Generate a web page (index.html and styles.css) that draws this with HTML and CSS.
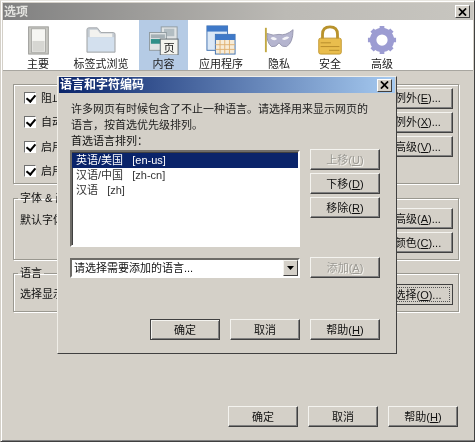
FILE: index.html
```html
<!DOCTYPE html>
<html lang="zh">
<head>
<meta charset="utf-8">
<title>选项</title>
<link rel="stylesheet" href="styles.css">
</head>
<body>
<div class="window">
  <div class="titlebar main-title">
    <span class="title-text">选项</span>
    <span class="close">
      <svg width="9" height="8" viewBox="0 0 10 9"><path d="M1 0.5 L9 8.5 M9 0.5 L1 8.5" stroke="#000" stroke-width="2" fill="none"/></svg>
    </span>
  </div>
  <div class="toolbar">
    <div class="tab">
      <svg class="icon" width="30" height="30" viewBox="0 0 32 32">
        <rect x="6" y="2" width="21" height="29" fill="#c9c9c4" stroke="#9a9a96"/>
        <rect x="9" y="4" width="15" height="25" fill="#f6f6f3" stroke="#a8a8a4"/>
        <rect x="10" y="17" width="13" height="11" fill="#d6d6d2"/>
      </svg>
      <span>主要</span>
    </div>
    <div class="tab">
      <svg class="icon" width="30" height="30" viewBox="0 0 32 32">
        <path d="M1 29 V5 Q1 3 3 3 H12 L16 8 H29 Q31 8 31 10 V29 Z" fill="#c4cbd2" stroke="#a4a8ab"/>
        <path d="M4 5 H12 L15 9 H28 V13 H4 Z" fill="#f2f2ef"/>
        <path d="M2 13 H30 V28 H2 Z" fill="#d3e0ee"/>
      </svg>
      <span>标签式浏览</span>
    </div>
    <div class="tab active">
      <svg class="icon" width="30" height="30" viewBox="0 0 32 32">
        <rect x="13" y="2" width="17" height="20" fill="#dfe3e4" stroke="#8f9a9f"/>
        <rect x="16" y="4" width="11" height="8" fill="#b2bdc2"/>
        <rect x="0.5" y="8" width="18" height="19" fill="#dfe3e4" stroke="#8f9a9f"/>
        <rect x="2" y="10" width="15" height="4" fill="#a5b0b5"/>
        <rect x="2" y="15" width="15" height="5" fill="#2f8f88"/>
        <rect x="12" y="15" width="19" height="17" fill="#f4f4ee" stroke="#5c666b"/>
        <text x="21.5" y="29" class="page-glyph">页</text>
      </svg>
      <span>内容</span>
    </div>
    <div class="tab">
      <svg class="icon" width="30" height="30" viewBox="0 0 32 32">
        <rect x="1" y="1" width="22" height="26" fill="#dbe8f6" stroke="#3e6fae"/>
        <rect x="1" y="1" width="22" height="6" fill="#3f79c8"/>
        <rect x="10" y="10" width="21" height="21" fill="#f7ecd8" stroke="#3e6fae"/>
        <rect x="10" y="10" width="21" height="6" fill="#3f79c8"/>
        <path d="M15 16 V31 M20 16 V31 M25 16 V31 M10 21 H31 M10 26 H31" stroke="#e0b070" fill="none"/>
      </svg>
      <span>应用程序</span>
    </div>
    <div class="tab">
      <svg class="icon" width="30" height="30" viewBox="0 0 32 32">
        <path d="M3 9 Q10 12 16 10 Q23 12 31 5 Q31 19 24 23 Q19 24 16 19 Q13 24 8 23 Q3 19 3 9 Z" fill="#b5b5cf" stroke="#9494ad"/>
        <path d="M7 14 Q10 11 14 15 Q10 18 7 14 Z M19 15 Q23 11 27 13 Q23 18 19 15 Z" fill="#f4f4f8"/>
        <rect x="1" y="3" width="2" height="26" fill="#c2a944"/>
      </svg>
      <span>隐私</span>
    </div>
    <div class="tab">
      <svg class="icon" width="30" height="30" viewBox="0 0 32 32">
        <path d="M8 15 V10 Q8 2 16 2 Q24 2 24 10 V15" fill="none" stroke="#b8922c" stroke-width="3"/>
        <rect x="4" y="14" width="24" height="17" rx="2" fill="#e9bd4d" stroke="#c0962e"/>
        <path d="M6 19 H17 M6 23 H26 M15 27 H26" stroke="#b58b2a" fill="none"/>
      </svg>
      <span>安全</span>
    </div>
    <div class="tab">
      <svg class="icon" width="30" height="30" viewBox="0 0 32 32">
        <circle cx="16" cy="16" r="9.5" fill="none" stroke="#9c9cd2" stroke-width="7"/>
        <path d="M16 1 V6 M16 26 V31 M1 16 H6 M26 16 H31 M5.4 5.4 L9 9 M23 23 L26.6 26.6 M26.6 5.4 L23 9 M9 23 L5.4 26.6" stroke="#9c9cd2" stroke-width="5" fill="none"/>
      </svg>
      <span>高级</span>
    </div>
  </div>
  <div class="main">
    <fieldset class="group g1">
      <div class="opt-row"><span class="check"></span><span class="opt-label">阻止弹出窗口</span><button class="btn">例外(<u>E</u>)...</button></div>
      <div class="opt-row"><span class="check"></span><span class="opt-label">自动加载图像</span><button class="btn">例外(<u>X</u>)...</button></div>
      <div class="opt-row"><span class="check"></span><span class="opt-label">启用 Java</span><button class="btn">高级(<u>V</u>)...</button></div>
      <div class="opt-row"><span class="check"></span><span class="opt-label">启用 JavaScript</span></div>
    </fieldset>
    <fieldset class="group g2">
      <legend>字体 &amp; 颜色</legend>
      <div class="g2-body">
        <span class="opt-text">默认字体</span>
        <div class="btn-col">
          <button class="btn">高级(<u>A</u>)...</button>
          <button class="btn">颜色(<u>C</u>)...</button>
        </div>
      </div>
    </fieldset>
    <fieldset class="group g3">
      <legend>语言</legend>
      <div class="g3-body">
        <span class="opt-text">选择显示网页的语言</span>
        <button class="btn focus">选择(<u>O</u>)...</button>
      </div>
    </fieldset>
  </div>
  <div class="footer">
    <button class="btn">确定</button>
    <button class="btn">取消</button>
    <button class="btn">帮助(<u>H</u>)</button>
  </div>
</div>

<div class="dialog">
  <div class="titlebar dlg-title">
    <span class="title-text">语言和字符编码</span>
    <span class="close">
      <svg width="9" height="8" viewBox="0 0 10 9"><path d="M1 0.5 L9 8.5 M9 0.5 L1 8.5" stroke="#000" stroke-width="2" fill="none"/></svg>
    </span>
  </div>
  <div class="dlg-body">
    <p class="intro">许多网页有时候包含了不止一种语言。请选择用来显示网页的<br>语言，按首选优先级排列。</p>
    <div class="list-label">首选语言排列：</div>
    <div class="list-row">
      <div class="listbox">
        <div class="item selected">英语/美国&nbsp;&nbsp; [en-us]</div>
        <div class="item">汉语/中国&nbsp;&nbsp; [zh-cn]</div>
        <div class="item">汉语&nbsp;&nbsp; [zh]</div>
      </div>
      <div class="btn-col list-btns">
        <button class="btn disabled">上移(<u>U</u>)</button>
        <button class="btn">下移(<u>D</u>)</button>
        <button class="btn">移除(<u>R</u>)</button>
      </div>
    </div>
    <div class="add-row">
      <div class="combo">
        <span class="combo-text">请选择需要添加的语言...</span>
        <span class="combo-arrow"><svg width="7" height="4" viewBox="0 0 7 4"><path d="M0 0 H7 L3.5 4 Z" fill="#000"/></svg></span>
      </div>
      <button class="btn disabled">添加(<u>A</u>)</button>
    </div>
    <div class="dlg-footer">
      <button class="btn default">确定</button>
      <button class="btn">取消</button>
      <button class="btn">帮助(<u>H</u>)</button>
    </div>
  </div>
</div>
</body>
</html>
```
FILE: styles.css
```css
* { box-sizing: border-box; }
html, body { margin: 0; padding: 0; }
body {
  width: 475px;
  height: 442px;
  position: relative;
  overflow: hidden;
  background: #d4d0c8;
  font-family: "Liberation Sans", "Noto Sans CJK SC", sans-serif;
  font-size: 11px;
  line-height: 14px;
  color: #111;
  filter: blur(0.3px);
}
.window {
  width: 475px;
  height: 442px;
  display: flex;
  flex-direction: column;
  background: #d4d0c8;
  border: 1px solid;
  border-color: #e8e6e0 #404040 #404040 #d4d0c8;
  padding: 2px 1px 1px 2px;
  box-shadow: inset 1px 1px 0 #fff, inset 0 -1px 0 #808080;
}
.titlebar {
  display: flex;
  align-items: center;
  justify-content: space-between;
  flex: none;
}
.main-title {
  height: 17px;
  background: linear-gradient(90deg, #808080, #bcbab5 60%, #c8c6c0);
  padding: 0 3px 0 1px;
}
.title-text { color: #e4e4e0; font-weight: 700; font-size: 12px; }
.close {
  width: 15px;
  height: 13px;
  display: flex;
  align-items: center;
  justify-content: center;
  background: #d4d0c8;
  border: 1px solid;
  border-color: #fff #404040 #404040 #fff;
}
.toolbar {
  height: 51px;
  flex: none;
  background: #fff;
  display: flex;
  padding-left: 10px;
  border-bottom: 1px solid #a8a6a0;
}
.tab {
  display: flex;
  flex-direction: column;
  align-items: center;
  flex: none;
  padding-top: 5px;
  color: #222;
}
.tab:nth-child(1) { width: 50px; }
.tab:nth-child(2) { width: 76px; }
.tab:nth-child(3) { width: 49px; }
.tab:nth-child(4) { width: 66px; }
.tab:nth-child(5) { width: 50px; }
.tab:nth-child(6) { width: 52px; }
.tab:nth-child(7) { width: 52px; }
.tab.active { background: #b5cbe5; }
.icon { display: block; margin-bottom: 2px; flex: none; }
.page-glyph { font-size: 12px; text-anchor: middle; fill: #222; }
.main {
  flex: 1;
  padding: 13px 14px 0 10px;
  display: flex;
  flex-direction: column;
}
.group {
  margin: 0;
  border: 1px solid #9a9890;
  box-shadow: 1px 1px 0 #fff, inset 1px 1px 0 #fff;
  padding: 0 5px 0 10px;
  min-width: 0;
  flex: none;
}
.group legend { padding: 0 2px; margin-left: -3px; line-height: 14px; }
.g1 { height: 100px; padding-top: 1px; }
.g2 { height: 69px; margin-top: 7px; padding-left: 7px; padding-top: 3px; }
.g3 { height: 46px; margin-top: 6px; padding-left: 7px; padding-top: 4px; }
.opt-row { display: flex; align-items: center; height: 24.3px; }
.opt-row .btn { margin-left: auto; }
.check {
  width: 12px;
  height: 12px;
  flex: none;
  margin-right: 5px;
  background: #fff;
  border: 1px solid;
  border-color: #707070 #fff #fff #707070;
  position: relative;
}
.check::after {
  content: "";
  position: absolute;
  left: 3px;
  top: 0;
  width: 4px;
  height: 7px;
  border: solid #000;
  border-width: 0 2px 2px 0;
  transform: rotate(40deg);
}
.g2-body { display: flex; justify-content: space-between; }
.g2-body .opt-text { margin-top: 5px; margin-left: -1px; }
.g3-body .opt-text { margin-left: -1px; margin-top: -2px; }
.g3-body { display: flex; justify-content: space-between; align-items: center; height: 21px; }
.btn {
  width: 70px;
  height: 21px;
  padding: 0;
  flex: none;
  font: inherit;
  color: #111;
  background: #d4d0c8;
  border: 1px solid;
  border-color: #f4f3ef #404040 #404040 #f4f3ef;
  box-shadow: inset -1px -1px 0 #808080;
  display: flex;
  align-items: center;
  justify-content: center;
}
.btn.disabled { color: #9c9a94; text-shadow: 1px 1px 0 #f4f3ef; }
.btn.default { border-color: #404040; box-shadow: inset 1px 1px 0 #f4f3ef, inset -1px -1px 0 #808080; }
.btn.focus { border-color: #404040; box-shadow: inset 0 0 0 1px #d4d0c8; outline: 1px dotted #555; outline-offset: -4px; }
.footer {
  flex: none;
  display: flex;
  justify-content: flex-end;
  gap: 10px;
  padding: 0 15px 13px 0;
}
.dialog {
  position: absolute;
  left: 57px;
  top: 76px;
  width: 340px;
  height: 278px;
  background: #d4d0c8;
  border: 1px solid;
  border-color: #f0eee8 #404040 #404040 #f0eee8;
  padding: 0 1px 1px;
  display: flex;
  flex-direction: column;
}
.dlg-title {
  height: 16px;
  background: linear-gradient(90deg, #0a246a, #a6caf0);
  padding: 0 3px 0 1px;
}
.dlg-title .title-text { color: #fff; }
.dlg-body { flex: 1; display: flex; flex-direction: column; padding: 8px 15px 12px 11px; }
.intro { margin: 0 0 0 1px; line-height: 16px; color: #222; white-space: nowrap; }
.list-label { margin-left: 1px; line-height: 16px; }
.list-row { display: flex; gap: 10px; margin-top: 1px; }
.listbox {
  width: 230px;
  height: 97px;
  flex: none;
  background: #fff;
  border: 2px solid;
  border-color: #6e6c68 #fff #fff #6e6c68;
  box-shadow: inset 1px 1px 0 #404040;
  padding-top: 1px;
}
.item { height: 15px; line-height: 15px; padding-left: 4px; color: #333; }
.item.selected { background: #0a246a; color: #fff; }
.btn-col { display: flex; flex-direction: column; gap: 3px; }
.list-btns { margin-top: -1px; }
.add-row { display: flex; gap: 10px; margin-top: 10px; align-items: center; }
.combo {
  width: 230px;
  height: 20px;
  flex: none;
  display: flex;
  background: #fff;
  border: 2px solid;
  border-color: #6e6c68 #fff #fff #6e6c68;
  padding-left: 2px;
  align-items: center;
}
.combo-text { flex: 1; }
.combo-arrow {
  width: 15px;
  height: 16px;
  background: #d4d0c8;
  border: 1px solid;
  border-color: #f4f3ef #404040 #404040 #f4f3ef;
  display: flex;
  align-items: center;
  justify-content: center;
}
.dlg-footer { margin-top: auto; display: flex; justify-content: flex-end; gap: 10px; }
```
